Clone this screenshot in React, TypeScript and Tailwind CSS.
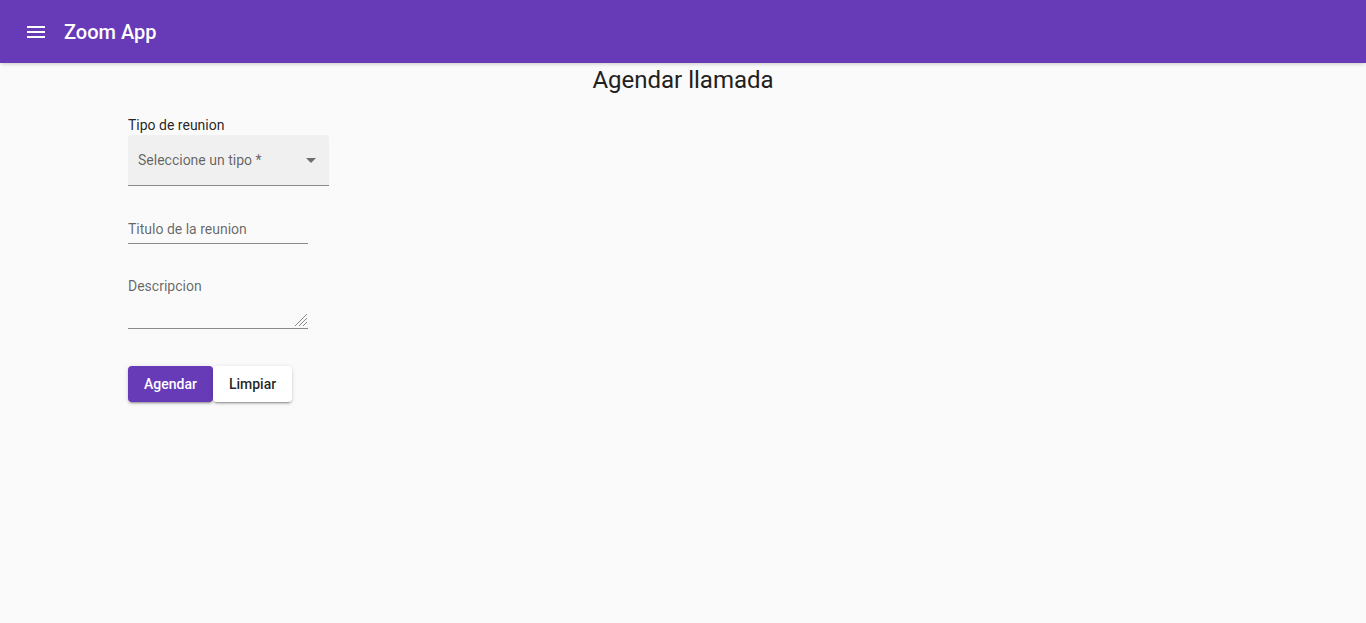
export default function App() {
  return (
    <div className="min-h-screen bg-[#fafafa]" style={{ fontFamily: 'Roboto, "Helvetica Neue", sans-serif' }}>
      {/* Toolbar */}
      <header className="h-[63px] bg-[#673ab7] flex items-center px-4 text-white shadow-[0_2px_4px_-1px_rgba(0,0,0,0.2)]">
        <button className="w-10 h-10 flex items-center justify-center">
          <svg width="24" height="24" viewBox="0 0 24 24" fill="white">
            <path d="M3 18h18v-2H3v2zm0-5h18v-2H3v2zm0-7v2h18V6H3z" />
          </svg>
        </button>
        <h1 className="ml-2 text-[20px] font-medium">Zoom App</h1>
      </header>

      {/* Main */}
      <main>
        <h2 className="text-center text-[24px] leading-8 text-[#212121] mt-[1px]">Agendar llamada</h2>

        <form className="ml-[128px] mt-[21px] flex flex-col">
          <label className="text-[14px] leading-4 text-[rgba(0,0,0,0.87)]">Tipo de reunion</label>
          <div className="mt-[2px] w-[201px] h-[51px] bg-[#f0f0f0] rounded-t-[4px] border-b border-[#8a8a8a] flex items-center justify-between pl-[10px] pr-[13px] pt-[1px]">
            <span className="text-[14px] text-[rgba(0,0,0,0.6)]">Seleccione un tipo *</span>
            <svg width="10" height="5" viewBox="0 0 10 5">
              <path d="M0 0l5 5 5-5z" fill="rgba(0,0,0,0.54)" />
            </svg>
          </div>

          <div className="mt-[35px] w-[180px] h-[23px] border-b border-[#8a8a8a] flex items-start">
            <span className="text-[14px] leading-4 text-[rgba(0,0,0,0.6)]">Titulo de la reunion</span>
          </div>

          <div className="mt-[30px] w-[180px] h-[55px] border-b border-[#8a8a8a] relative">
            <span className="text-[14px] leading-4 text-[rgba(0,0,0,0.6)]">Descripcion</span>
            <svg width="14" height="14" viewBox="0 0 14 14" className="absolute right-0 bottom-[1px]">
              <path d="M13 1L1 13M13 5L5 13M13 9L9 13" stroke="#8a8a8a" strokeWidth="1" />
            </svg>
          </div>

          <div className="mt-[37px] flex">
            <button type="button" className="h-9 px-4 rounded-[4px] bg-[#673ab7] text-white text-[14px] font-medium shadow-[0_3px_1px_-2px_rgba(0,0,0,0.2),0_2px_2px_0_rgba(0,0,0,0.14),0_1px_5px_0_rgba(0,0,0,0.12)]">
              Agendar
            </button>
            <button type="button" className="h-9 px-4 rounded-[4px] bg-white text-[rgba(0,0,0,0.87)] text-[14px] font-medium shadow-[0_3px_1px_-2px_rgba(0,0,0,0.2),0_2px_2px_0_rgba(0,0,0,0.14),0_1px_5px_0_rgba(0,0,0,0.12)]">
              Limpiar
            </button>
          </div>
        </form>
      </main>
    </div>
  );
}
